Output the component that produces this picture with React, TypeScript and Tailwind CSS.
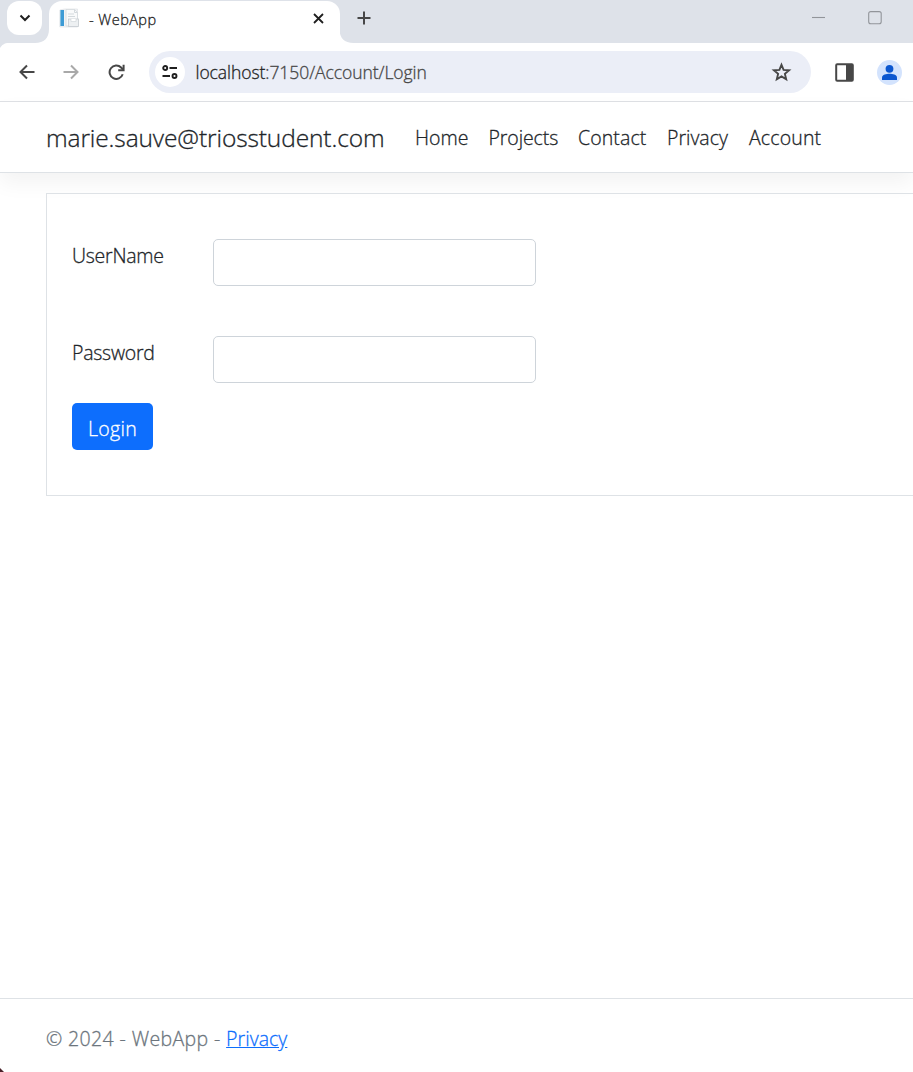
import type { ReactNode } from "react";

function TabStrip() {
  return (
    <div className="relative flex h-[43px] bg-[#dee2e9]">
      <div className="h-[43px] w-[49px] rounded-br-[14px]">
        <button className="mt-px ml-[7px] flex h-[34px] w-[35px] items-center justify-center rounded-[12px] bg-white">
          <svg width="12" height="8" viewBox="0 0 12 8" fill="none" stroke="#1f1f1f" strokeWidth="2">
            <path d="M1.500 1.500 6 6l4.500-4.500" />
          </svg>
        </button>
      </div>
      <div className="mt-px flex h-[42px] w-[291px] items-start rounded-t-[13px] bg-white">
        <svg className="mt-[7px] ml-[10px] shrink-0" width="22" height="21" viewBox="0 0 22 21">
          <path d="M5.500 1h13v18H.8V2z" fill="#f1f3f5" stroke="#dfe3e6" strokeWidth=".7" />
          <rect x="1" y="2" width="4" height="16" fill="#3d9bd5" />
          <rect x="1" y="2" width="1" height="16" fill="#86bfe0" />
          <path d="M7 1.500h8.500l3 3V18H7z" fill="#f9fafb" stroke="#d3d9dd" strokeWidth=".8" />
          <path d="M15.500 1.500v3h3M9 6h6M9 8.500h7" fill="none" stroke="#d3d9dd" />
          <rect x="9.500" y="11" width="10" height="7.500" fill="#edf0f2" stroke="#c5cbd0" strokeWidth=".8" />
          <path d="M12 11v2.500h5V11" fill="#fff" stroke="#d3d9dd" strokeWidth=".7" />
        </svg>
        <span className="mt-[8px] ml-[8px] w-[224px] text-[14.500px] leading-[21px] tracking-[0.450px] whitespace-nowrap text-[#1f1f1f]">- WebApp</span>
        <svg className="mt-[12px] shrink-0" width="11" height="11" viewBox="0 0 11 11" stroke="#1f1f1f" strokeWidth="1.800">
          <path d="m1 1 9 9M10 1 1 10" />
        </svg>
      </div>
      <svg className="mt-[11px] ml-[17px]" width="14" height="14" viewBox="0 0 14 14" stroke="#474747" strokeWidth="2">
        <path d="M.5 7h13M7 .5v13" />
      </svg>
      <svg className="mt-[10px] ml-auto" width="102" height="16" viewBox="0 0 102 16" fill="none" stroke="#92959a" strokeWidth="1.100">
        <path d="M1 7.500h13" />
        <rect x="57.700" y="1.600" width="12.500" height="12.200" rx="2" />
      </svg>
      <svg className="absolute top-0 left-0" width="360" height="50" viewBox="0 0 360 50">
        <path d="M35 43c9 0 14-5 14-14v14z" fill="#fff" />
        <path d="M339.500 29c0 9 5 14 14 14h-14z" fill="#fff" />
        <path d="M0 43h9C4 43 2 45 0 48z" fill="#dee2e9" />
      </svg>
    </div>
  );
}

function AddressBar() {
  return (
    <div className="flex h-[59px] items-center border-b border-[#dfe1e5] bg-white">
      <svg className="ml-[19px] shrink-0" width="16" height="16" viewBox="0 0 16 16" fill="none" stroke="#474747" strokeWidth="2">
        <path d="M15.500 8H2M8 1.500 1.500 8 8 14.500" />
      </svg>
      <svg className="ml-[28px] shrink-0" width="16" height="16" viewBox="0 0 16 16" fill="none" stroke="#a9a9a9" strokeWidth="2">
        <path d="M.5 8H14M8 1.500 14.500 8 8 14.500" />
      </svg>
      <svg className="ml-[29px] shrink-0" width="17" height="17" viewBox="0 0 17 17" fill="none" stroke="#474747" strokeWidth="2">
        <path d="M14.700 10.200A6.700 6.700 0 1 1 13.100 3.500L15 5.500" />
        <path d="M15.600.8v5.400h-5.400" />
      </svg>
      <div className="ml-[24px] flex h-[42px] w-[662px] shrink-0 items-center rounded-full bg-[#ebeef7]">
        <div className="ml-[6px] flex h-[30px] w-[30px] items-center justify-center rounded-full bg-white">
          <svg width="16" height="14" viewBox="0 0 16 14" fill="none" stroke="#1f1f1f" strokeWidth="1.900">
            <circle cx="3.200" cy="3" r="2" />
            <path d="M7.500 3H15M.5 11H8" />
            <circle cx="12.500" cy="11" r="2" />
          </svg>
        </div>
        <span className="ml-[10.500px] text-[17.500px] leading-[24px] tracking-[-0.060px] whitespace-nowrap text-[#474747]">
          <span className="text-[#1f1f1f]">localhost</span>:7150/Account/Login
        </span>
        <svg className="mr-[19px] ml-auto" width="21" height="20" viewBox="0 0 21 20" fill="none" stroke="#474747" strokeWidth="1.900">
          <path d="m10.500 2.800 2.100 5.100 5.500.4-4.200 3.600 1.300 5.400-4.700-2.900-4.700 2.900 1.300-5.400-4.200-3.600 5.500-.4z" />
        </svg>
      </div>
      <svg className="ml-[24px] shrink-0" width="19" height="19" viewBox="0 0 19 19">
        <rect x="1.200" y="1.200" width="16.600" height="16.600" rx="1" fill="none" stroke="#474747" strokeWidth="2" />
        <path d="M11 1h7v17h-7z" fill="#474747" />
      </svg>
      <svg className="ml-[23px] shrink-0" width="25" height="25" viewBox="0 0 25 25">
        <circle cx="12.500" cy="12.500" r="12.500" fill="#d3e3fd" />
        <circle cx="12.500" cy="8.800" r="3.900" fill="#0b57d0" />
        <path d="M5 20v-2.300c0-3 4.500-3.900 7.500-3.900s7.500.9 7.500 3.900V20z" fill="#0b57d0" />
      </svg>
    </div>
  );
}

function NavLink({ className, children }: { className: string; children: ReactNode }) {
  return (
    <a href="#" className={`${className} mr-[20px] block whitespace-nowrap text-[19.500px] leading-[30px]`}>
      {children}
    </a>
  );
}

function SiteHeader() {
  return (
    <header className="flex h-[71px] items-center border-b border-[#dee2e6] bg-white pt-[2px] pl-[46px] text-[#212529] shadow-[0_10px_20px_rgba(0,0,0,0.05)]">
      <a href="#" className="mr-[31px] w-[338px] shrink-0 whitespace-nowrap text-[24.500px] leading-[38px] tracking-[-0.110px]">
        marie.sauve@triosstudent.com
      </a>
      <nav className="flex">
        <NavLink className="w-[53.500px]">Home</NavLink>
        <NavLink className="w-[69.500px] tracking-[-0.100px]">Projects</NavLink>
        <NavLink className="w-[69px] tracking-[0.100px]">Contact</NavLink>
        <NavLink className="w-[62px]">Privacy</NavLink>
        <NavLink className="w-[73px] tracking-[0.150px]">Account</NavLink>
      </nav>
    </header>
  );
}

function Field({ label, type }: { label: string; type: string }) {
  return (
    <label className="flex h-[47px]">
      <span className="w-[141px] pt-[2px] text-[19.500px] leading-[30px] tracking-[-0.250px]">{label}</span>
      <input type={type} className="h-[47px] w-[323px] rounded-[5px] border border-[#ced4da] bg-white px-[15px] outline-none" />
    </label>
  );
}

export default function App() {
  return (
    <div className="flex h-[1072px] w-[913px] flex-col overflow-hidden bg-white font-['Open_Sans','Noto_Sans',sans-serif] font-light text-[#212529] [-webkit-text-stroke:0.3px]">
      <TabStrip />
      <AddressBar />
      <SiteHeader />
      <main className="flex-1 pt-[20px] pl-[46px]">
        <form className="flex h-[303px] flex-col border-y border-l border-[#dee2e6] pt-[45px] pl-[25px]">
          <Field label="UserName" type="text" />
          <div className="mt-[50px]">
            <Field label="Password" type="password" />
          </div>
          <button type="button" className="mt-[20px] h-[47px] w-[81px] rounded-[5px] bg-[#0d6efd] pt-[4px] text-[19.500px] leading-[30px] tracking-[0.350px] text-white">
            Login
          </button>
        </form>
      </main>
      <footer className="relative h-[74px] border-t border-[#dee2e6] pt-[25px] pl-[46px] text-[19.500px] leading-[30px] tracking-[0.380px] whitespace-nowrap text-[#6c757d]">
        © 2024 - WebApp - <a href="#" className="tracking-[0.050px] text-[#0d6efd] underline">Privacy</a>
        <svg className="absolute bottom-0 left-0" width="4" height="4" viewBox="0 0 4 4">
          <path d="M0 0 4 4H0z" fill="#4a2029" />
        </svg>
      </footer>
    </div>
  );
}
